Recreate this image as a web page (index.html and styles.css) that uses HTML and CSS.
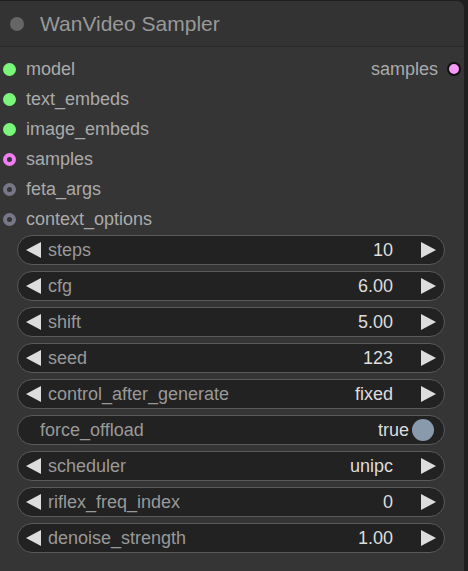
FILE: index.html
```
<!DOCTYPE html>
<html>
<head>
<meta charset="utf-8">
<link rel="stylesheet" href="styles.css">
</head>
<body>
<div class="node">
  <div class="title">
    <span class="title-dot"></span>
    <span class="title-text">WanVideo Sampler</span>
  </div>
  <div class="slots">
    <div class="slot-row">
      <div class="slot in"><span class="dot green"></span><span>model</span></div>
      <div class="slot out"><span>samples</span><span class="dot pink-out"></span></div>
    </div>
    <div class="slot-row"><div class="slot in"><span class="dot green"></span><span>text_embeds</span></div></div>
    <div class="slot-row"><div class="slot in"><span class="dot green"></span><span>image_embeds</span></div></div>
    <div class="slot-row"><div class="slot in"><span class="dot ring pink"></span><span>samples</span></div></div>
    <div class="slot-row"><div class="slot in"><span class="dot ring grey"></span><span>feta_args</span></div></div>
    <div class="slot-row"><div class="slot in"><span class="dot ring grey"></span><span>context_options</span></div></div>
  </div>
  <div class="widgets">
    <div class="widget"><span class="arrow left"></span><span class="label">steps</span><span class="value">10</span><span class="arrow right"></span></div>
    <div class="widget"><span class="arrow left"></span><span class="label">cfg</span><span class="value">6.00</span><span class="arrow right"></span></div>
    <div class="widget"><span class="arrow left"></span><span class="label">shift</span><span class="value">5.00</span><span class="arrow right"></span></div>
    <div class="widget"><span class="arrow left"></span><span class="label">seed</span><span class="value">123</span><span class="arrow right"></span></div>
    <div class="widget"><span class="arrow left"></span><span class="label">control_after_generate</span><span class="value">fixed</span><span class="arrow right"></span></div>
    <div class="widget toggle"><span class="label">force_offload</span><span class="value">true</span><span class="knob"></span></div>
    <div class="widget"><span class="arrow left"></span><span class="label">scheduler</span><span class="value">unipc</span><span class="arrow right"></span></div>
    <div class="widget"><span class="arrow left"></span><span class="label">riflex_freq_index</span><span class="value">0</span><span class="arrow right"></span></div>
    <div class="widget"><span class="arrow left"></span><span class="label">denoise_strength</span><span class="value">1.00</span><span class="arrow right"></span></div>
  </div>
</div>
</body>
</html>
```
FILE: styles.css
```
html, body {
  margin: 0;
  padding: 0;
  background: #1f1f1f;
  font-family: "Liberation Sans", Arial, sans-serif;
}
body {
  width: 468px;
  height: 571px;
  overflow: hidden;
}
.node {
  margin-top: 1px;
  margin-left: -8px;
  width: 472px;
  height: 580px;
  background: #353535;
  border-radius: 0 8px 0 0;
}
.title {
  height: 45px;
  display: flex;
  align-items: center;
  background: #333333;
  border-radius: 0 8px 0 0;
  border-bottom: 1px solid #2a2a2a;
}
.title-dot {
  width: 14px;
  height: 14px;
  border-radius: 50%;
  background: #666666;
  margin-left: 18px;
}
.title-text {
  margin-left: 16px;
  font-size: 21px;
  color: #999999;
  margin-top: 1px;
}
.slots {
  padding-top: 7px;
  display: flex;
  flex-direction: column;
}
.slot-row {
  height: 30px;
  display: flex;
  align-items: center;
  justify-content: space-between;
}
.slot {
  display: flex;
  align-items: center;
  font-size: 18px;
  color: #aaaaaa;
}
.slot.in .dot {
  margin-left: 11px;
  margin-right: 10px;
}
.slot.out .dot {
  margin-left: 9px;
  margin-right: 3px;
}
.dot {
  width: 13px;
  height: 13px;
  border-radius: 50%;
  box-sizing: border-box;
}
.dot.green {
  background: #7af77a;
}
.dot.ring {
  border: 4px solid;
  background: #353535;
}
.dot.ring.pink { border-color: #f07ef0; }
.dot.ring.grey { border-color: #777788; }
.dot.pink-out {
  background: #f59af5;
  border: 2px solid #111111;
  width: 14px;
  height: 14px;
}
.widgets {
  margin-top: 1px;
  padding-left: 25px;
  display: flex;
  flex-direction: column;
  gap: 6px;
}
.widget {
  width: 428px;
  height: 30px;
  box-sizing: border-box;
  border: 1.5px solid #5a5a5a;
  border-radius: 15px;
  background: #222222;
  display: flex;
  align-items: center;
  font-size: 18px;
  padding: 0 8px;
}
.arrow {
  width: 0;
  height: 0;
  border-top: 8px solid transparent;
  border-bottom: 8px solid transparent;
}
.arrow.left {
  border-right: 15px solid #dddddd;
  margin-right: 7px;
}
.arrow.right {
  border-left: 15px solid #dddddd;
  margin-left: 28px;
}
.label {
  color: #999999;
  flex: 1;
}
.value {
  color: #dddddd;
}
.toggle {
  padding-left: 22px;
  padding-right: 10px;
}
.toggle .value {
  margin-right: 3px;
}
.knob {
  width: 22px;
  height: 22px;
  border-radius: 50%;
  background: #8a9aad;
}
```
